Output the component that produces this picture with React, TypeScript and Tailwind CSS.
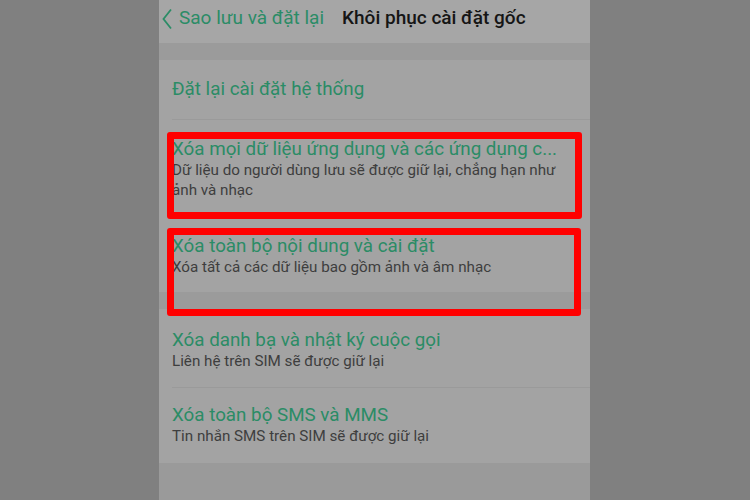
import React from "react";

const font = { fontFamily: "Roboto, 'Noto Sans', sans-serif" };

function Item({ title, sub }: { title: string; sub: string[] }) {
  return (
    <div className="flex flex-col pl-[13px] pr-[10px]">
      <div className="text-[18.8px] leading-[22px] text-[#2b8c66] whitespace-nowrap">{title}</div>
      {sub.map((s, i) => (
        <div key={i} className="text-[15.2px] leading-[20px] text-[#3e3e3e] whitespace-nowrap">{s}</div>
      ))}
    </div>
  );
}

export default function App() {
  return (
    <div className="relative w-[750px] h-[500px] bg-[#808080] overflow-hidden" style={font}>
      <div className="ml-[159px] w-[431px] h-[500px] flex flex-col bg-[#9c9c9c]">
        <div className="h-[43px] bg-[#a6a6a6] flex items-center pb-[6px]">
          <svg width="14" height="22" viewBox="0 0 14 22" className="ml-[2px]">
            <path d="M10 1.5 L2.5 11 L10 20.5" fill="none" stroke="#2b8c66" strokeWidth="1.8" />
          </svg>
          <span className="ml-[4px] text-[19px] text-[#2b8c66] whitespace-nowrap">Sao lưu và đặt lại</span>
          <span className="ml-[18px] text-[19px] font-medium text-[#151515] whitespace-nowrap">Khôi phục cài đặt gốc</span>
        </div>
        <div className="h-[17px] bg-[#9b9b9b]" />
        <div className="bg-[#a3a3a3] flex flex-col">
          <div className="h-[59px] flex items-center pl-[13px] text-[18.8px] text-[#2b8c66]">Đặt lại cài đặt hệ thống</div>
          <div className="h-px bg-[#9a9a9a] ml-[13px]" />
          <div className="pt-[18px] h-[102px]">
            <Item
              title="Xóa mọi dữ liệu ứng dụng và các ứng dụng c..."
              sub={["Dữ liệu do người dùng lưu sẽ được giữ lại, chẳng hạn như", "ảnh và nhạc"]}
            />
          </div>
          <div className="pt-[13px] h-[70px]">
            <Item title="Xóa toàn bộ nội dung và cài đặt" sub={["Xóa tất cả các dữ liệu bao gồm ảnh và âm nhạc"]} />
          </div>
        </div>
        <div className="h-[17px] bg-[#9b9b9b]" />
        <div className="bg-[#a3a3a3] flex flex-col">
          <div className="pt-[20px] h-[78px]">
            <Item title="Xóa danh bạ và nhật ký cuộc gọi" sub={["Liên hệ trên SIM sẽ được giữ lại"]} />
          </div>
          <div className="h-px bg-[#9a9a9a] ml-[13px]" />
          <div className="pt-[16px] h-[75px]">
            <Item title="Xóa toàn bộ SMS và MMS" sub={["Tin nhắn SMS trên SIM sẽ được giữ lại"]} />
          </div>
        </div>
        <div className="flex-1 bg-[#9a9a9a]" />
      </div>
      <div className="absolute left-[167px] top-[132px] w-[415px] h-[87px] border-[7px] border-[#ff0000] rounded-[3px]" />
      <div className="absolute left-[167px] top-[228px] w-[414px] h-[88px] border-[7px] border-[#ff0000] rounded-[3px]" />
    </div>
  );
}
